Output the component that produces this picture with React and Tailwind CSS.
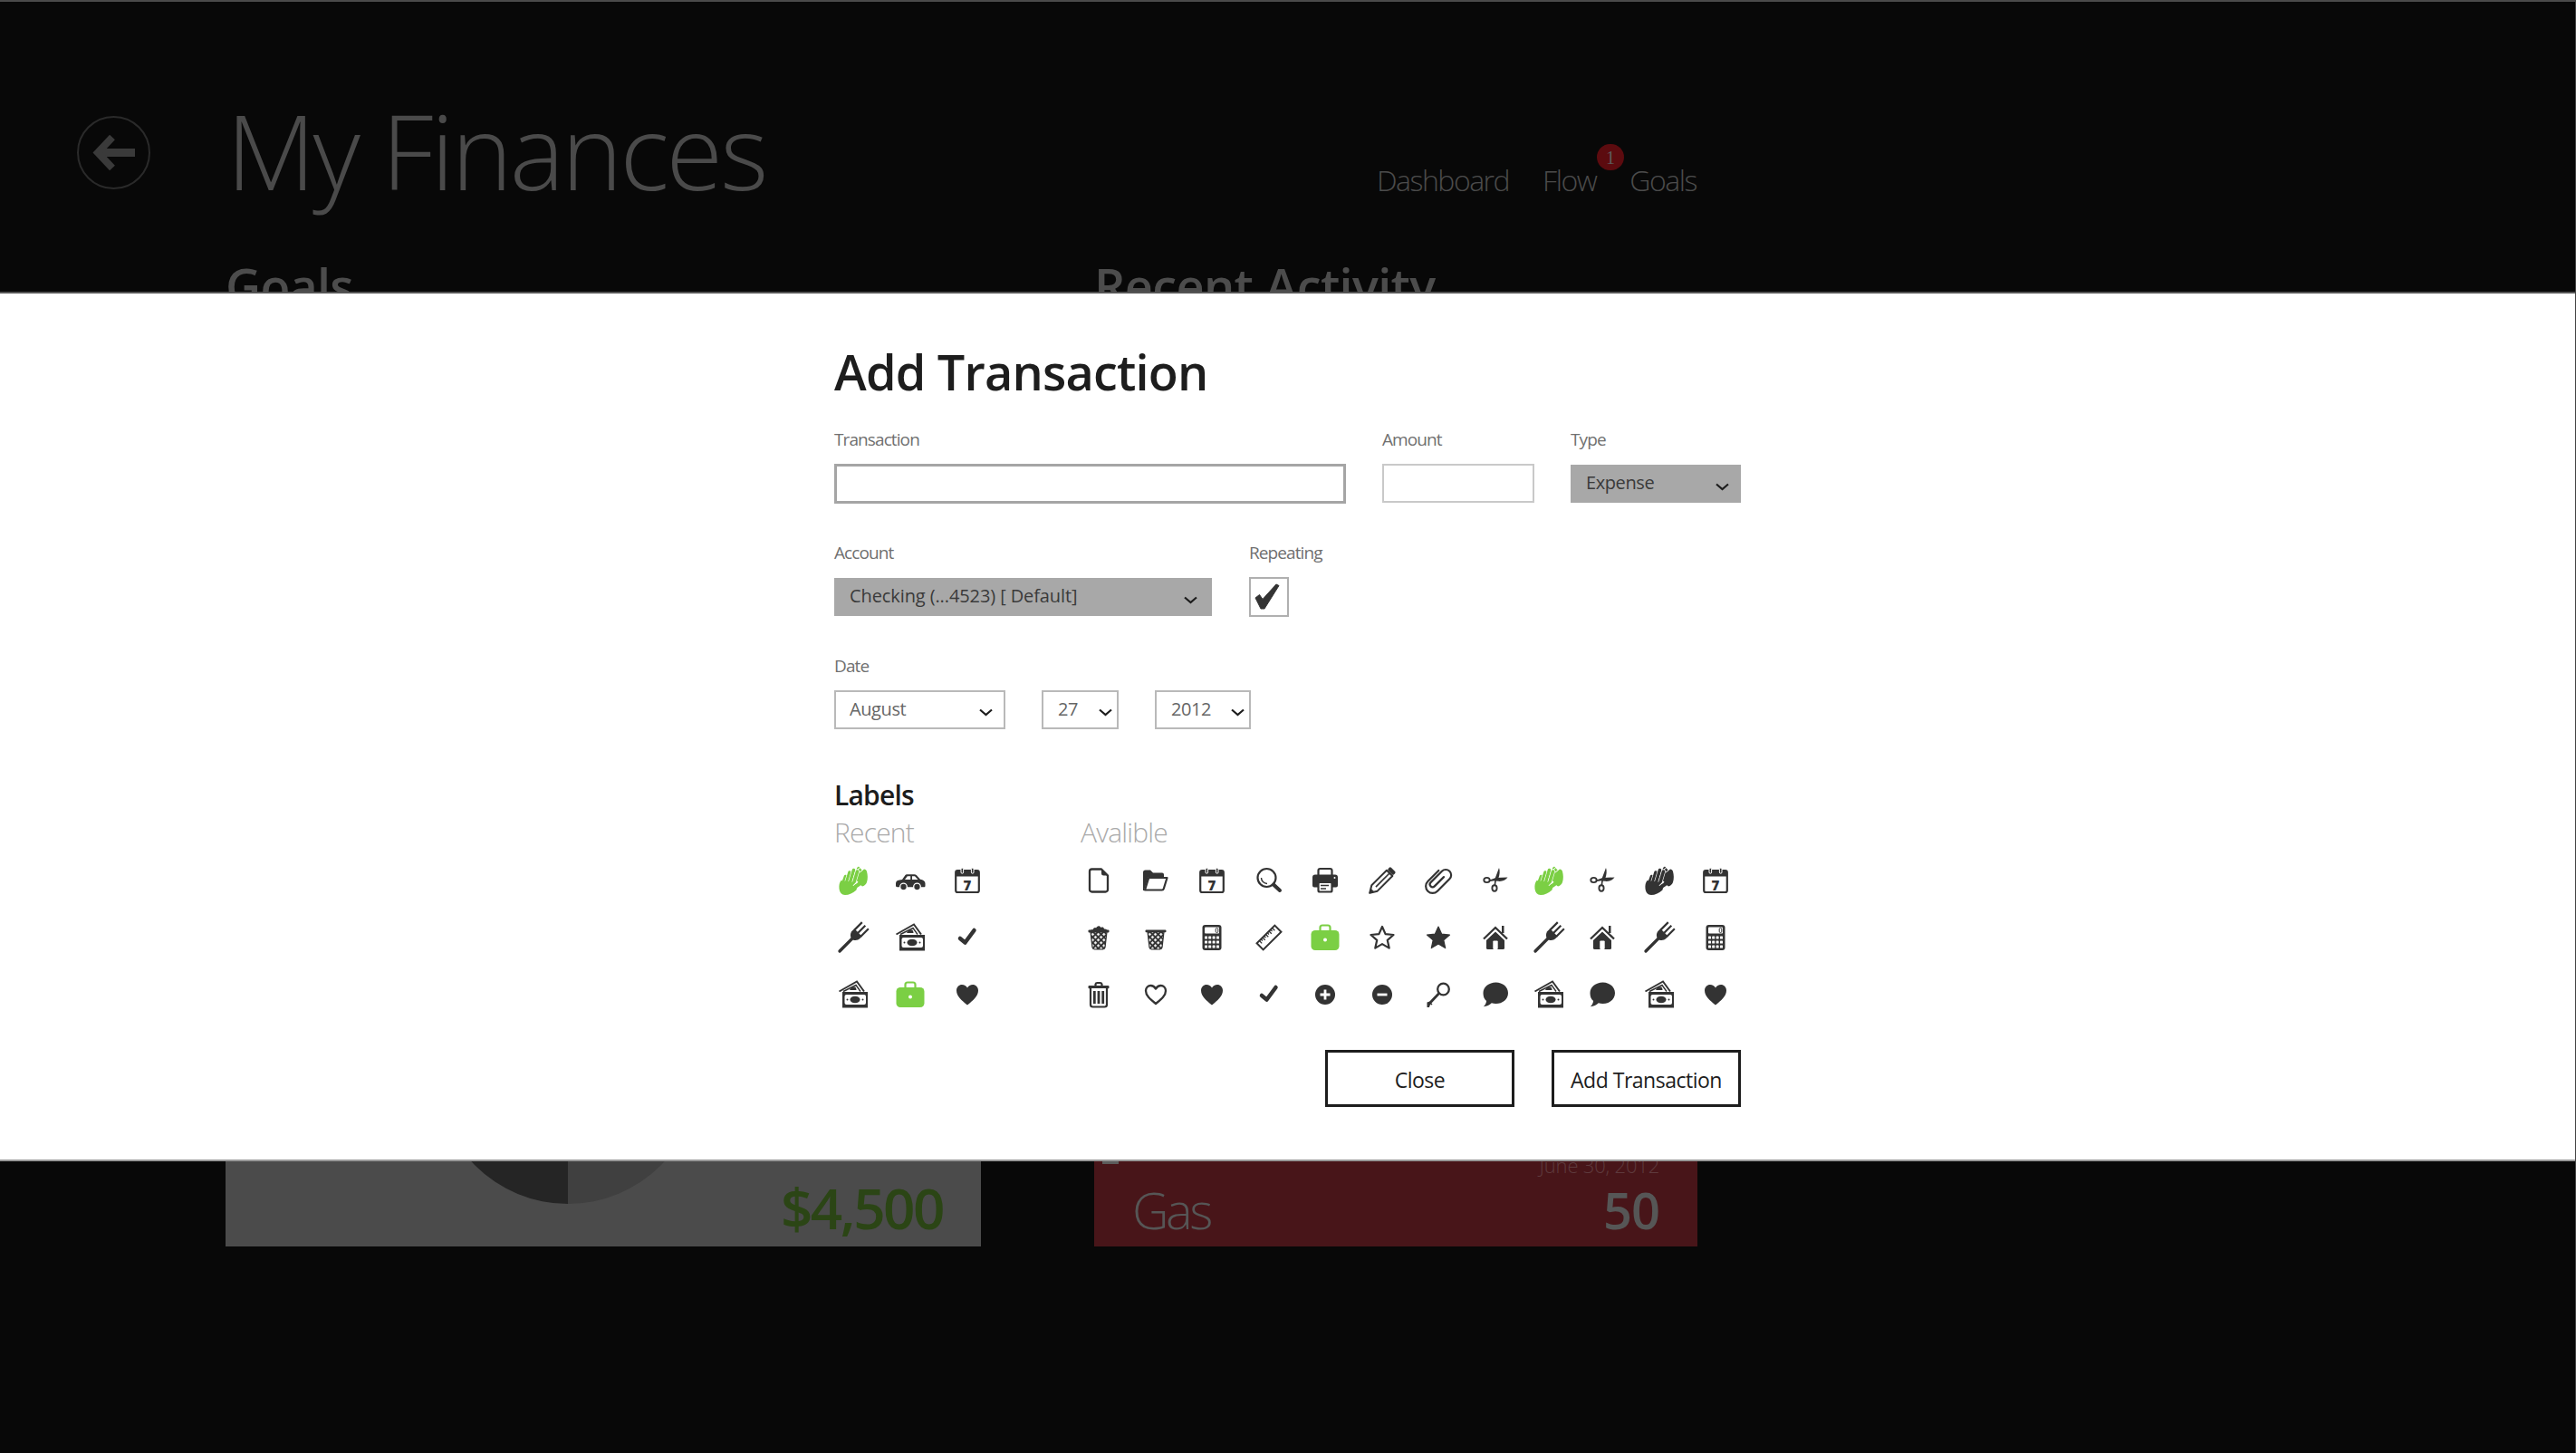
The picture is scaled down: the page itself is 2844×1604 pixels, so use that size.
const D = "#333333";
const G = "#7bcf44";

const Cal = ({ c = D }) => (
  <svg width="32" height="32" viewBox="0 0 32 32">
    <rect x="3.2" y="5.2" width="25.6" height="23.8" rx="2" fill="#fff" stroke={c} strokeWidth="2.2" />
    <rect x="3" y="5" width="26" height="6.5" fill={c} />
    <rect x="9" y="2.2" width="2.6" height="6" rx="1.3" fill={c} stroke="#fff" strokeWidth="1" />
    <rect x="20.4" y="2.2" width="2.6" height="6" rx="1.3" fill={c} stroke="#fff" strokeWidth="1" />
    <text x="16" y="26.500" textAnchor="middle" fontFamily="'Open Sans',sans-serif" fontWeight="800" fontSize="15" fill={c}>7</text>
  </svg>
);
const fingers = [
  [5, 22, 8.500, 12.500],
  [9, 21, 13, 8],
  [13, 21, 17.500, 5.500],
  [17, 22, 21.500, 7],
];
const Hands = ({ c = D }) => (
  <svg width="34" height="34" viewBox="0 0 34 34">
    <path d="M21 3l2-1.500 4 4.500 2-1.500c1.500 0 2.500 1 3 2.500 1 4 1.300 8 0 12-1 2.500-3 4-5 4.500l-8-6z" fill={c} />
    <path d="M21 5.500l3.500-2.500M24 8l3.500-2.500" stroke="#fff" strokeWidth="1" />
    {fingers.map(([a, b, x, y], i) => (
      <g key={i}>
        <path d={`M${a} ${b}L${x} ${y}`} stroke="#fff" strokeWidth="4.800" strokeLinecap="round" />
        <path d={`M${a} ${b}L${x} ${y}`} stroke={c} strokeWidth="3.600" strokeLinecap="round" />
      </g>
    ))}
    <path d="M1.500 26C1 22 2 19 3.500 17l16 2 2 4-1 4.500C17 31 12 33 8 33 4 33 2 30 1.500 26z" fill={c} />
    <path d="M17 23l5-5" stroke="#fff" strokeWidth="1.200" />
    <path d="M19 24l4.500-3" stroke={c} strokeWidth="4" strokeLinecap="round" />
    <path d="M21 28l3-2.500" stroke="#fff" strokeWidth="1.200" />
  </svg>
);
const Car = () => (
  <svg width="34" height="32" viewBox="0 0 34 32">
    <path d="M1 19.500c0-2.500 1-3.500 4-4l3-.5 3.500-5c.5-.6 1-.8 2-.8h8c1 0 1.800.3 2.500 1l4 4.500c3 .5 5.500 2 5.500 4.500v2.500c0 1-.5 1.500-1.500 1.500H2.500C1.500 23.200 1 22.500 1 21.500z" fill={D} />
    <path d="M11 15l2.800-3.800h3.400V15zM19 11.200h3l3.500 3.800H19z" fill="#fff" />
    <circle cx="9.500" cy="23" r="3.800" fill={D} stroke="#fff" strokeWidth="1.300" />
    <circle cx="24.500" cy="23" r="3.800" fill={D} stroke="#fff" strokeWidth="1.300" />
  </svg>
);
const Fork = () => (
  <svg width="36" height="36" viewBox="0 0 36 36">
    <g transform="translate(20 16) rotate(45)">
      <path d="M0 2V24" stroke={D} strokeWidth="3.400" strokeLinecap="round" />
      <path d="M-6 -5V-2C-6 2 -3 5 0 5S6 2 6 -2V-5z" fill={D} />
      <path d="M-5 -16V-4M0 -16V-4M5 -16V-4" stroke={D} strokeWidth="2.200" />
    </g>
  </svg>
);
const Money = () => (
  <svg width="34" height="34" viewBox="0 0 34 34">
    <path d="M1.500 13.500L21 2.500l8 11" fill="none" stroke={D} strokeWidth="2" />
    <path d="M6 13.500L20 6.500l5 7" fill="#fff" stroke={D} strokeWidth="1.400" />
    <path d="M13 12c1-3 4-4 6-3.500 1 .5 1.500 2 1.500 3.500z" fill={D} />
    <rect x="5" y="14" width="28" height="17.500" fill={D} />
    <rect x="7.500" y="17" width="23.500" height="11" rx="2" fill="#fff" />
    <ellipse cx="19" cy="22.500" rx="5.500" ry="3.800" fill={D} />
    <circle cx="10.500" cy="22.500" r="1" fill={D} />
    <circle cx="27.500" cy="22.500" r="1" fill={D} />
  </svg>
);
const Check = () => (
  <svg width="32" height="32" viewBox="0 0 32 32">
    <path d="M8 17l5.500 4.500L23.500 8" stroke={D} strokeWidth="4.500" strokeLinecap="round" strokeLinejoin="round" fill="none" />
  </svg>
);
const Case = () => (
  <svg width="34" height="34" viewBox="0 0 34 34">
    <path d="M11.500 9V6a2.500 2.500 0 0 1 2.500-2.500h6A2.500 2.500 0 0 1 22.500 6V9" stroke={G} strokeWidth="2.200" fill="none" />
    <rect x="1.500" y="9" width="31" height="22" rx="4.500" fill={G} />
    <circle cx="17" cy="19.500" r="2" fill="#fff" />
  </svg>
);
const Heart = () => (
  <svg width="32" height="32" viewBox="0 0 32 32">
    <path d="M16 27.500C10 22.500 4 18 4 11.500 4 7.500 7 5 10 5c2.600 0 4.800 1.500 6 3.500C17.200 6.500 19.400 5 22 5c3 0 6 2.500 6 6.500 0 6.500-6 11-12 16z" fill={D} />
  </svg>
);
const HeartO = () => (
  <svg width="32" height="32" viewBox="0 0 32 32">
    <path d="M16 26C10.500 21.500 5 17.500 5 11.700 5 8.200 7.700 6 10.300 6c2.500 0 4.500 1.500 5.700 3.600C17.200 7.500 19.200 6 21.700 6 24.300 6 27 8.200 27 11.700 27 17.500 21.500 21.500 16 26z" fill="none" stroke={D} strokeWidth="2.300" strokeLinejoin="round" />
  </svg>
);
const File = () => (
  <svg width="32" height="32" viewBox="0 0 32 32">
    <path d="M8.500 3.500H19l7 7V26a2.500 2.500 0 0 1-2.500 2.500h-15A2.500 2.500 0 0 1 6 26V6a2.500 2.500 0 0 1 2.500-2.500z" fill="#fff" stroke={D} strokeWidth="2.300" strokeLinejoin="round" />
    <path d="M19 3.500V8a2.500 2.500 0 0 0 2.500 2.500H26z" fill={D} />
  </svg>
);
const Folder = () => (
  <svg width="32" height="32" viewBox="0 0 32 32">
    <path d="M2 7a2.500 2.500 0 0 1 2.500-2.500h5.500l3 3h10a2 2 0 0 1 2 2V12H8l-5 15H2z" fill={D} />
    <path d="M8.200 13h20.300l-3.700 12a2 2 0 0 1-2 1.500H4z" fill="#fff" stroke={D} strokeWidth="2.200" strokeLinejoin="round" />
  </svg>
);
const Search = () => (
  <svg width="32" height="32" viewBox="0 0 32 32">
    <circle cx="13.500" cy="13" r="10" fill="none" stroke={D} strokeWidth="2.200" />
    <path d="M7.500 13a6.500 6.500 0 0 0 6.500 6.500" fill="none" stroke={D} strokeWidth="1.400" />
    <path d="M21 20.500l7 6.500" stroke={D} strokeWidth="4" strokeLinecap="round" />
  </svg>
);
const Printer = () => (
  <svg width="32" height="32" viewBox="0 0 32 32">
    <path d="M8.500 11V5a2 2 0 0 1 2-2h11a2 2 0 0 1 2 2v6" fill="#fff" stroke={D} strokeWidth="2.200" />
    <path d="M5 9.500h22a3 3 0 0 1 3 3v9a2 2 0 0 1-2 2h-4v-4H8v4H4a2 2 0 0 1-2-2v-9a3 3 0 0 1 3-3z" fill={D} />
    <rect x="8.500" y="18" width="15" height="10.500" rx="1.500" fill="#fff" stroke={D} strokeWidth="2.200" />
    <path d="M11 21.500h9M11 25h6" stroke={D} strokeWidth="1.500" />
    <circle cx="26.500" cy="13" r="1" fill="#fff" />
  </svg>
);
const Pencil = () => (
  <svg width="32" height="32" viewBox="0 0 32 32">
    <g transform="translate(16 16) rotate(45)">
      <rect x="-4.500" y="-17" width="9" height="4.500" rx="1.500" fill={D} />
      <path d="M-4.500 -11.500H4.500V12L0 19.500-4.500 12z" fill="#fff" stroke={D} strokeWidth="2" strokeLinejoin="round" />
      <path d="M0 -11V10" stroke={D} strokeWidth="1.600" />
      <path d="M-2.200 15.500H2.200L0 19.500z" fill={D} stroke={D} strokeWidth="1" />
    </g>
  </svg>
);
const Clip = () => (
  <svg width="32" height="32" viewBox="0 0 32 32">
    <g transform="translate(16 16) rotate(45)" fill="none" stroke={D} strokeWidth="2.200" strokeLinecap="round">
      <path d="M1.500 -7V7.500a3 3 0 0 1-6 0V-10a6 6 0 0 1 12 0V9a7.500 7.500 0 0 1-15 0V-8" />
    </g>
  </svg>
);
const Scissors = () => (
  <svg width="32" height="32" viewBox="0 0 32 32">
    <ellipse cx="6.500" cy="15.500" rx="3.200" ry="2.600" fill="none" stroke={D} strokeWidth="1.900" />
    <ellipse cx="15" cy="24.500" rx="2.600" ry="3.200" fill="none" stroke={D} strokeWidth="1.900" />
    <path d="M14.500 21l1-7L20 2c1.200 3 .8 8-.8 12l-2.500 3-.5 4z" fill={D} />
    <path d="M9.500 15.500l7-2.500 13-.5c-2 3-6 4.800-10.500 4.300l-3.500-.6-6 .8z" fill={D} />
  </svg>
);
const Pat = ({ id }) => (
  <defs>
    <pattern id={id} width="4.400" height="4.400" patternUnits="userSpaceOnUse" patternTransform="rotate(45)">
      <rect width="4.400" height="4.400" fill={D} />
      <rect x="1" y="1" width="2.400" height="2.400" fill="#fff" />
    </pattern>
  </defs>
);
const Basket = ({ full }) => {
  const id = full ? "pf" : "pe";
  return (
    <svg width="32" height="32" viewBox="0 0 32 32">
      <Pat id={id} />
      {full && <path d="M6 10c0-2 2-3 3.500-2.500C10.500 5 12 4.500 13 5.500 14 3 17 2 18.500 5c1.500-1 3-.5 3.500 1.500 2-.5 4 1 4 3.500z" fill={D} />}
      <path d="M7 9.500h18L23 27a2.500 2.500 0 0 1-2.500 2h-9A2.500 2.500 0 0 1 9 27z" fill={`url(#${id})`} stroke={D} strokeWidth="1.200" />
      <rect x="4.500" y="7.500" width="23" height={full ? 3 : 2.800} rx="1" fill={D} />
    </svg>
  );
};
const Calc = () => (
  <svg width="32" height="32" viewBox="0 0 32 32">
    <rect x="5.500" y="2" width="21" height="28" rx="3" fill={D} />
    <rect x="8" y="4.500" width="16" height="7" rx="1" fill="#fff" />
    <rect x="20.200" y="5.500" width="2.600" height="5" rx="1.200" fill="none" stroke={D} strokeWidth="1" />
    {[14.500, 19.500, 24.500].flatMap((y) =>
      [8, 12.200, 16.600, 21].map((x) => <rect key={`${x}-${y}`} x={x} y={y} width="3" height="3" rx=".6" fill="#fff" />)
    )}
  </svg>
);
const Ruler = () => (
  <svg width="32" height="32" viewBox="0 0 32 32">
    <g transform="translate(16 16) rotate(-45)">
      <rect x="-14" y="-5" width="28" height="10" fill="#fff" stroke={D} strokeWidth="2" />
      <path d="M-10 -5v4M-7.500 -5v2.500M-5 -5v4M-2.500 -5v2.500M0 -5v4M2.500 -5v2.500M5 -5v4M7.500 -5v2.500M10 -5v4" stroke={D} strokeWidth="1.300" />
    </g>
  </svg>
);
const starD = "M16 4l3.600 8.100 8.900.9-6.700 5.900 1.900 8.700L16 23.100l-7.700 4.500 1.900-8.700L3.500 13l8.900-.9z";
const StarO = () => (
  <svg width="32" height="32" viewBox="0 0 32 32">
    <path d={starD} fill="none" stroke={D} strokeWidth="2.200" strokeLinejoin="round" />
  </svg>
);
const Star = () => (
  <svg width="32" height="32" viewBox="0 0 32 32">
    <path d={starD} fill={D} stroke={D} strokeWidth="1.200" strokeLinejoin="round" />
  </svg>
);
const Home = () => (
  <svg width="32" height="32" viewBox="0 0 32 32">
    <path d="M23 3h2.500v8H23z" fill={D} />
    <path d="M3 17.500L16 5l13 12.500" fill="none" stroke={D} strokeWidth="2.300" />
    <path d="M6 19L16 9.500 26 19v8.500a1.500 1.500 0 0 1-1.500 1.500h-17A1.500 1.500 0 0 1 6 27.500z" fill={D} />
    <rect x="13.300" y="19.500" width="5.400" height="9.500" rx="1" fill="#fff" />
  </svg>
);
const Trash = () => (
  <svg width="32" height="32" viewBox="0 0 32 32">
    <path d="M12.500 6V4.500A2 2 0 0 1 14.500 3h3a2 2 0 0 1 2 1.500V6" fill="none" stroke={D} strokeWidth="2.200" />
    <rect x="4.500" y="6" width="23" height="3.200" rx="1" fill={D} />
    <path d="M7 9v18a2.500 2.500 0 0 0 2.500 2.500h13A2.500 2.500 0 0 0 25 27V9" fill="#fff" stroke={D} strokeWidth="2.200" />
    <path d="M11.300 12v14M16 12v14M20.700 12v14" stroke={D} strokeWidth="2.800" />
  </svg>
);
const Plus = () => (
  <svg width="32" height="32" viewBox="0 0 32 32">
    <circle cx="16" cy="16" r="11" fill={D} />
    <path d="M16 10.500v11M10.500 16h11" stroke="#fff" strokeWidth="2.800" />
  </svg>
);
const Minus = () => (
  <svg width="32" height="32" viewBox="0 0 32 32">
    <circle cx="16" cy="16" r="11" fill={D} />
    <path d="M10.500 16h11" stroke="#fff" strokeWidth="2.800" />
  </svg>
);
const Key = () => (
  <svg width="32" height="32" viewBox="0 0 32 32">
    <circle cx="21.500" cy="10" r="6.300" fill="none" stroke={D} strokeWidth="2.300" />
    <path d="M16.800 14.500L5 27" stroke={D} strokeWidth="2.800" />
    <path d="M3.500 24.500l3-1 3 3-1 1-1.500-1-1 3.500h-2.500z" fill={D} />
  </svg>
);
const Bubble = () => (
  <svg width="32" height="32" viewBox="0 0 32 32">
    <path d="M16.500 2.500c7.500 0 13.500 5 13.500 11.700S24 26 16.500 26c-1.700 0-3.300-.2-4.700-.7-2.200 2.300-5.300 3.700-9 4 1.800-1.700 3-3.700 3.300-6.300C3.500 20.800 2.500 17.700 2.500 14.200 2.500 7.500 9 2.500 16.500 2.500z" fill={D} />
  </svg>
);

const recent = [
  <Hands c={G} />, <Car />, <Cal />,
  <Fork />, <Money />, <Check />,
  <Money />, <Case />, <Heart />,
];
const available = [
  <File />, <Folder />, <Cal />, <Search />, <Printer />, <Pencil />, <Clip />, <Scissors />, <Hands c={G} />, <Scissors />, <Hands />, <Cal />,
  <Basket full />, <Basket />, <Calc />, <Ruler />, <Case />, <StarO />, <Star />, <Home />, <Fork />, <Home />, <Fork />, <Calc />,
  <Trash />, <HeartO />, <Heart />, <Check />, <Plus />, <Minus />, <Key />, <Bubble />, <Money />, <Bubble />, <Money />, <Heart />,
];

const Chevron = () => (
  <svg width="15" height="9" viewBox="0 0 15 9" className="mt-[6px] shrink-0">
    <path d="M1 1.500L7.500 7 14 1.500" fill="none" stroke="#1d1d1d" strokeWidth="2.200" />
  </svg>
);
const Label = ({ children }) => (
  <div className="h-[20px] text-[19px] leading-[20px] tracking-[-0.9px] text-[#707070]">{children}</div>
);
const Select = ({ children, gray, className = "" }) => (
  <div
    className={`flex items-center justify-between text-[20px] ${
      gray ? "bg-[#a8a8a8] text-[#3a3a3a]" : "border-2 border-[#b9b9b9] bg-white text-[#666]"
    } ${className}`}
  >
    <span className="pb-[2px]">{children}</span>
    <Chevron />
  </div>
);
const Btn = ({ children }) => (
  <button className="flex h-[63px] w-[209px] items-center justify-center border-[3px] border-[#1d1d1d] bg-white pt-[4px] text-[23px] tracking-[-0.5px] text-[#1d1d1d]">
    {children}
  </button>
);
const Cell = ({ children }) => (
  <div className="flex h-[63px] items-center justify-center">{children}</div>
);

export default function App() {
  return (
    <div className="relative h-[1604px] w-[2844px] overflow-hidden border-t-2 border-r border-t-[#4a4a4a] border-r-[#444] bg-[#080808] font-['Open_Sans',sans-serif]">
      <header className="flex h-[277px] items-start">
        <div className="ml-[85px] mt-[126px] flex h-[81px] w-[81px] items-center justify-center rounded-full border-2 border-[#2a2a2a]">
          <svg width="47" height="39" viewBox="0 0 47 39">
            <path d="M6 19.500h41" stroke="#3a3a3a" strokeWidth="9" />
            <path d="M22 2.500L6 19.500l16 17" fill="none" stroke="#3a3a3a" strokeWidth="8" />
          </svg>
        </div>
        <h1 className="ml-[84px] mt-[89px] w-[603px] text-[114px] font-light leading-[150px] tracking-[-3px] text-[#4a4a4a]">My Finances</h1>
        <nav className="relative ml-[667px] mt-[175px] flex gap-[37px] text-[32px] font-light leading-[44px] tracking-[-1.500px] text-[#4c4c4c]">
          <span>Dashboard</span>
          <span>Flow</span>
          <span>Goals</span>
          <span className="absolute left-[243px] top-[-18px] flex h-[29px] w-[30px] items-center justify-center rounded-full bg-[#5c0b0f] font-['Liberation_Serif',serif] text-[20px] font-normal leading-none tracking-normal text-[#5c5c5c]">1</span>
        </nav>
      </header>
      <main className="ml-[249px] flex gap-[125px]">
        <section className="w-[834px]">
          <h2 className="text-[54px] font-semibold leading-[72px] tracking-[-0.8px] text-[#4c4c4c]">Goals</h2>
          <div className="relative mt-[300px] h-[725px] overflow-hidden bg-[#4b4b4b]">
            <svg width="300" height="300" viewBox="0 0 300 300" className="absolute left-[228px] top-[383px]">
              <path d="M150 5a145 145 0 0 0 0 290z" fill="#252525" />
              <path d="M150 5a145 145 0 0 1 0 290z" fill="#404040" />
            </svg>
            <span className="absolute bottom-px right-[42px] text-[62px] font-semibold leading-[84px] tracking-[-2.500px] text-[#2b4515]">$4,500</span>
          </div>
        </section>
        <section className="w-[666px]">
          <h2 className="text-[54px] font-semibold leading-[72px] tracking-[-0.65px] text-[#4c4c4c]">Recent Activity</h2>
          <div className="relative mt-[300px] flex h-[725px] flex-col justify-end bg-[#481519] px-[42px] pb-[3px]">
            <span className="absolute left-[9px] top-[631px] h-[3px] w-[18px] bg-[#5c5c5c]" />
            <div className="-mb-[3px] text-right text-[22px] font-light leading-[28px] tracking-[-0.2px] text-[#5e3a3d]">June 30, 2012</div>
            <div className="flex items-end justify-between">
              <span className="text-[56px] font-light leading-[76px] tracking-[-3.500px] text-[#565656]">Gas</span>
              <span className="text-[56px] font-semibold leading-[76px] tracking-[-1px] text-[#565656]">50</span>
            </div>
          </div>
        </section>
      </main>

      <div className="absolute left-0 right-[-1px] top-[320px] h-[960px] border-y-2 border-r border-t-[#555] border-b-[#999] border-r-[#bbb] bg-white pl-[921px]">
        <h2 className="mt-[49px] text-[54px] font-semibold leading-[74px] tracking-[-0.8px] text-[#1d1d1d]">Add Transaction</h2>
        <div className="mt-[28px] flex gap-[40px]">
          <div className="w-[565px]">
            <Label>Transaction</Label>
            <div className="mt-[17px] h-[44px] border-[3px] border-[#a5a5a5] bg-white" />
          </div>
          <div className="w-[168px]">
            <Label>Amount</Label>
            <div className="mt-[17px] h-[43px] border-2 border-[#c9c9c9] bg-white" />
          </div>
          <div className="w-[188px]">
            <Label>Type</Label>
            <Select gray className="mt-[18px] h-[42px] pl-[17px] pr-[13px] tracking-[-0.4px]">Expense</Select>
          </div>
        </div>
        <div className="mt-[44px] flex gap-[41px]">
          <div className="w-[417px]">
            <Label>Account</Label>
            <Select gray className="mt-[18px] h-[42px] pl-[17px] pr-[16px] tracking-[-0.1px]">Checking (...4523) [ Default]</Select>
          </div>
          <div>
            <Label>Repeating</Label>
            <div className="mt-[17px] h-[44px] w-[44px] border-2 border-[#b0b0b0]">
              <svg width="40" height="40" viewBox="0 0 40 40">
                <path d="M5 21l4.500-3.500 3.500 5L28 6l3 1.500L15 33h-4z" fill={D} strokeLinejoin="round" stroke={D} strokeWidth="1" />
              </svg>
            </div>
          </div>
        </div>
        <div className="mt-[44px]">
          <Label>Date</Label>
          <div className="mt-[17px] flex gap-[40px]">
            <Select className="h-[43px] w-[189px] pl-[15px] pr-[12px] tracking-[-0.4px]">August</Select>
            <Select className="h-[43px] w-[85px] pl-[16px] pr-[5px] tracking-[-0.4px]">27</Select>
            <Select className="h-[43px] w-[106px] pl-[16px] pr-[5px] tracking-[-0.4px]">2012</Select>
          </div>
        </div>
        <h3 className="mt-[53px] text-[30px] font-semibold leading-[40px] tracking-[-0.8px] text-[#1d1d1d]">Labels</h3>
        <div className="mt-[2px] flex">
          <div className="w-[272px]">
            <div className="text-[30px] font-light leading-[38px] tracking-[-0.8px] text-[#aaa]">Recent</div>
            <div className="-ml-[11px] mt-[2px] grid w-[189px] grid-cols-[64px_62px_63px]">
              {recent.map((ic, i) => <Cell key={i}>{ic}</Cell>)}
            </div>
          </div>
          <div>
            <div className="text-[30px] font-light leading-[38px] tracking-[-0.8px] text-[#aaa]">Avalible</div>
            <div className="-ml-[11px] mt-[2px] grid grid-cols-[repeat(8,62.5px)_56px_62.500px_62.500px_62.500px]">
              {available.map((ic, i) => <Cell key={i}>{ic}</Cell>)}
            </div>
          </div>
        </div>
        <div className="absolute left-[1463px] top-[835px] flex gap-[41px]">
          <Btn>Close</Btn>
          <Btn>Add Transaction</Btn>
        </div>
      </div>
    </div>
  );
}
